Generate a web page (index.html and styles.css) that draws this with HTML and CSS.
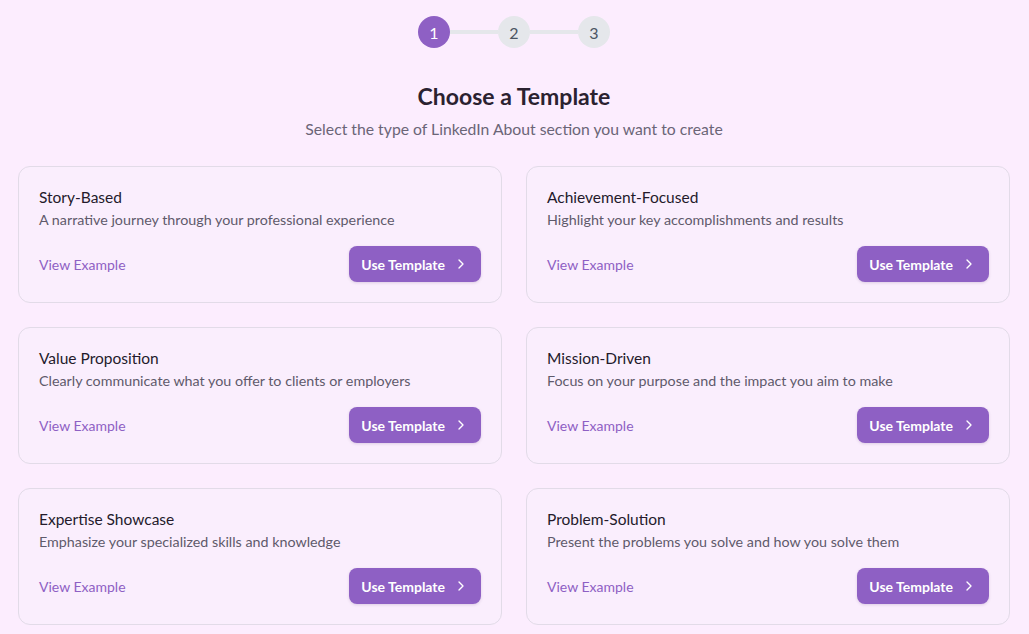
FILE: index.html
```html
<!DOCTYPE html>
<html lang="en">
<head>
  <meta charset="UTF-8" />
  <meta name="viewport" content="width=device-width, initial-scale=1.0"/>
  <title>Choose a Template</title>
  <link rel="stylesheet" href="styles.css">
</head>
<body>
  <div class="wizard">
    <div class="stepper">
      <div class="step active">1</div>
      <div class="step-line"></div>
      <div class="step">2</div>
      <div class="step-line"></div>
      <div class="step">3</div>
    </div>

    <h1 class="wizard-title">Choose a Template</h1>
    <p class="wizard-subtitle">Select the type of LinkedIn About section you want to create</p>

    <div class="template-grid">
      <div class="template-card">
        <div class="template-name">Story-Based</div>
        <div class="template-desc">A narrative journey through your professional experience</div>
        <div class="template-actions">
          <a href="#" class="view-link">View Example</a>
          <button class="use-btn">Use Template
            <svg viewBox="0 0 24 24" width="16" height="16"><path d="m9 18 6-6-6-6"/></svg>
          </button>
        </div>
      </div>

      <div class="template-card">
        <div class="template-name">Achievement-Focused</div>
        <div class="template-desc">Highlight your key accomplishments and results</div>
        <div class="template-actions">
          <a href="#" class="view-link">View Example</a>
          <button class="use-btn">Use Template
            <svg viewBox="0 0 24 24" width="16" height="16"><path d="m9 18 6-6-6-6"/></svg>
          </button>
        </div>
      </div>

      <div class="template-card">
        <div class="template-name">Value Proposition</div>
        <div class="template-desc">Clearly communicate what you offer to clients or employers</div>
        <div class="template-actions">
          <a href="#" class="view-link">View Example</a>
          <button class="use-btn">Use Template
            <svg viewBox="0 0 24 24" width="16" height="16"><path d="m9 18 6-6-6-6"/></svg>
          </button>
        </div>
      </div>

      <div class="template-card">
        <div class="template-name">Mission-Driven</div>
        <div class="template-desc">Focus on your purpose and the impact you aim to make</div>
        <div class="template-actions">
          <a href="#" class="view-link">View Example</a>
          <button class="use-btn">Use Template
            <svg viewBox="0 0 24 24" width="16" height="16"><path d="m9 18 6-6-6-6"/></svg>
          </button>
        </div>
      </div>

      <div class="template-card">
        <div class="template-name">Expertise Showcase</div>
        <div class="template-desc">Emphasize your specialized skills and knowledge</div>
        <div class="template-actions">
          <a href="#" class="view-link">View Example</a>
          <button class="use-btn">Use Template
            <svg viewBox="0 0 24 24" width="16" height="16"><path d="m9 18 6-6-6-6"/></svg>
          </button>
        </div>
      </div>

      <div class="template-card">
        <div class="template-name">Problem-Solution</div>
        <div class="template-desc">Present the problems you solve and how you solve them</div>
        <div class="template-actions">
          <a href="#" class="view-link">View Example</a>
          <button class="use-btn">Use Template
            <svg viewBox="0 0 24 24" width="16" height="16"><path d="m9 18 6-6-6-6"/></svg>
          </button>
        </div>
      </div>
    </div>
  </div>
</body>
</html>
```

FILE: styles.css
```css
body {
  margin: 0;
  font-family: Lato, "Open Sans", sans-serif;
  background-color: #fcedfe;
  color: #241a2b;
}

.wizard {
  padding: 16px 19px 10px 18px;
}

.stepper {
  display: flex;
  justify-content: center;
  align-items: center;
}

.step {
  width: 32px;
  height: 32px;
  border-radius: 50%;
  background: #e5e7eb;
  color: #4b5563;
  font-size: 16px;
  display: flex;
  align-items: center;
  justify-content: center;
}

.step.active {
  background: #8e60c4;
  color: #fff;
}

.step-line {
  width: 48px;
  height: 4px;
  background: #e5e7eb;
}

.wizard-title {
  margin: 32px 0 0;
  font-size: 23px;
  line-height: 32px;
  font-weight: 700;
  text-align: center;
  color: #2b2230;
}

.wizard-subtitle {
  margin: 5px 0 0;
  font-size: 15.75px;
  line-height: 24px;
  text-align: center;
  color: #6b6577;
}

.template-grid {
  display: grid;
  grid-template-columns: 1fr 1fr;
  gap: 24px 24px;
  margin-top: 25px;
}

.template-card {
  background: #faeefd;
  border: 1px solid #e2dbe8;
  border-radius: 12px;
  padding: 20px;
}

.template-name {
  font-size: 15.5px;
  line-height: 20px;
  color: #241a2b;
}

.template-desc {
  margin-top: 3px;
  font-size: 14.3px;
  line-height: 20px;
  color: #5f5a6b;
}

.template-actions {
  display: flex;
  justify-content: space-between;
  align-items: center;
  margin-top: 16px;
}

.view-link {
  font-size: 14px;
  color: #8e60c4;
  text-decoration: none;
}

.use-btn {
  display: flex;
  align-items: center;
  gap: 8px;
  height: 36px;
  padding: 0 12px;
  border: none;
  border-radius: 8px;
  background: #8e60c4;
  color: #fff;
  font-family: inherit;
  font-size: 14px;
  font-weight: 700;
  box-shadow: 0 1px 3px rgba(60, 20, 90, 0.15);
  cursor: pointer;
}

.use-btn svg {
  fill: none;
  stroke: #fff;
  stroke-width: 2;
  stroke-linecap: round;
  stroke-linejoin: round;
}
```
